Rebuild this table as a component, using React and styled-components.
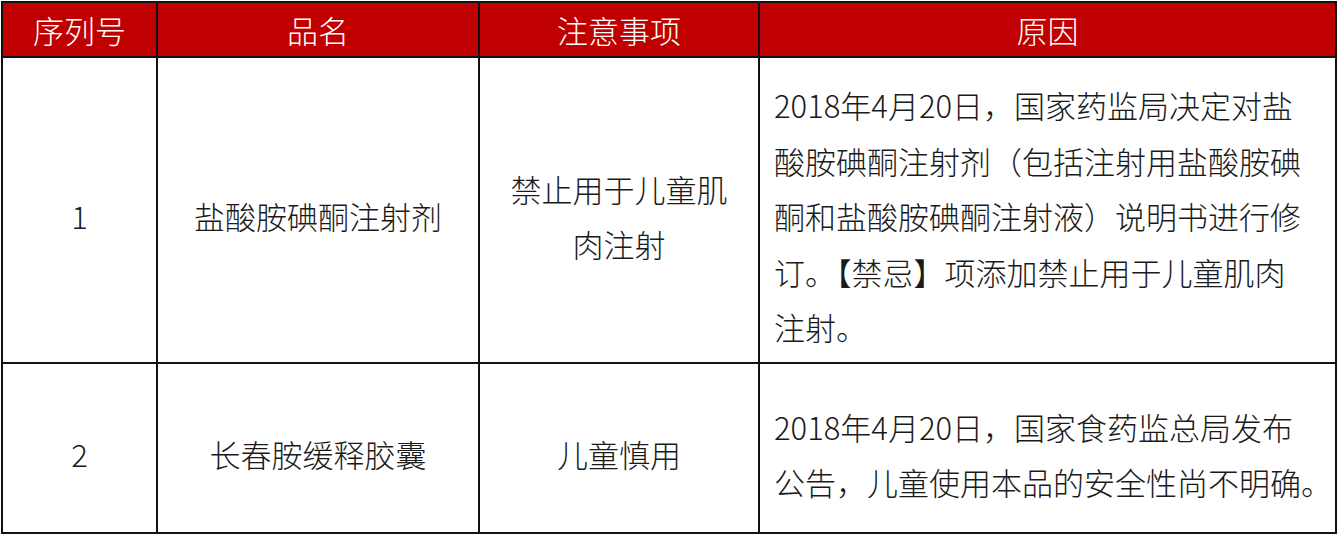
import React from "react";
import styled, { createGlobalStyle } from "styled-components";

const Global = createGlobalStyle`
  html, body { margin: 0; padding: 0; background: #fff; }
  body { font-family: "Noto Sans CJK SC", "Noto Sans", sans-serif; }
`;

const Wrap = styled.div`
  padding: 1px 0 0 1px;
  width: 1338px;
  box-sizing: border-box;
`;

const Table = styled.table`
  border-collapse: collapse;
  table-layout: fixed;
  width: 1334px;
  font-size: 31px;
  font-weight: 300;
  color: #1a1a1a;
`;

const HeadCell = styled.th`
  background: #c00000;
  color: #fff;
  font-weight: 300;
  font-size: 31px;
  height: 53px;
  padding: 0;
  border: 2px solid #111;
  text-align: center;
  vertical-align: middle;
  line-height: 53px;
`;

const Cell = styled.td`
  border: 2px solid #111;
  height: ${(p) => p.$h}px;
  padding: 12px ${(p) => (p.$left ? "14px" : "0")} 0;
  text-align: ${(p) => (p.$left ? "left" : "center")};
  vertical-align: middle;
  line-height: 55.5px;
  white-space: nowrap;
  box-sizing: border-box;
`;

const rows = [
  {
    no: "1",
    name: ["盐酸胺碘酮注射剂"],
    note: ["禁止用于儿童肌", "肉注射"],
    reason: [
      "2018年4月20日，国家药监局决定对盐",
      "酸胺碘酮注射剂（包括注射用盐酸胺碘",
      "酮和盐酸胺碘酮注射液）说明书进行修",
      "订。【禁忌】项添加禁止用于儿童肌肉",
      "注射。",
    ],
    h: 306,
  },
  {
    no: "2",
    name: ["长春胺缓释胶囊"],
    note: ["儿童慎用"],
    reason: ["2018年4月20日，国家食药监总局发布", "公告，儿童使用本品的安全性尚不明确。"],
    h: 170,
  },
];

const Lines = ({ items }) =>
  items.map((t, i) => (
    <React.Fragment key={i}>
      {i > 0 && <br />}
      {t}
    </React.Fragment>
  ));

export default function App() {
  return (
    <>
      <Global />
      <Wrap>
        <Table>
          <colgroup>
            <col style={{ width: 155 }} />
            <col style={{ width: 322 }} />
            <col style={{ width: 280 }} />
            <col style={{ width: 577 }} />
          </colgroup>
          <thead>
            <tr>
              <HeadCell>序列号</HeadCell>
              <HeadCell>品名</HeadCell>
              <HeadCell>注意事项</HeadCell>
              <HeadCell>原因</HeadCell>
            </tr>
          </thead>
          <tbody>
            {rows.map((r) => (
              <tr key={r.no}>
                <Cell $h={r.h}>{r.no}</Cell>
                <Cell $h={r.h}>
                  <Lines items={r.name} />
                </Cell>
                <Cell $h={r.h}>
                  <Lines items={r.note} />
                </Cell>
                <Cell $h={r.h} $left>
                  <Lines items={r.reason} />
                </Cell>
              </tr>
            ))}
          </tbody>
        </Table>
      </Wrap>
    </>
  );
}
